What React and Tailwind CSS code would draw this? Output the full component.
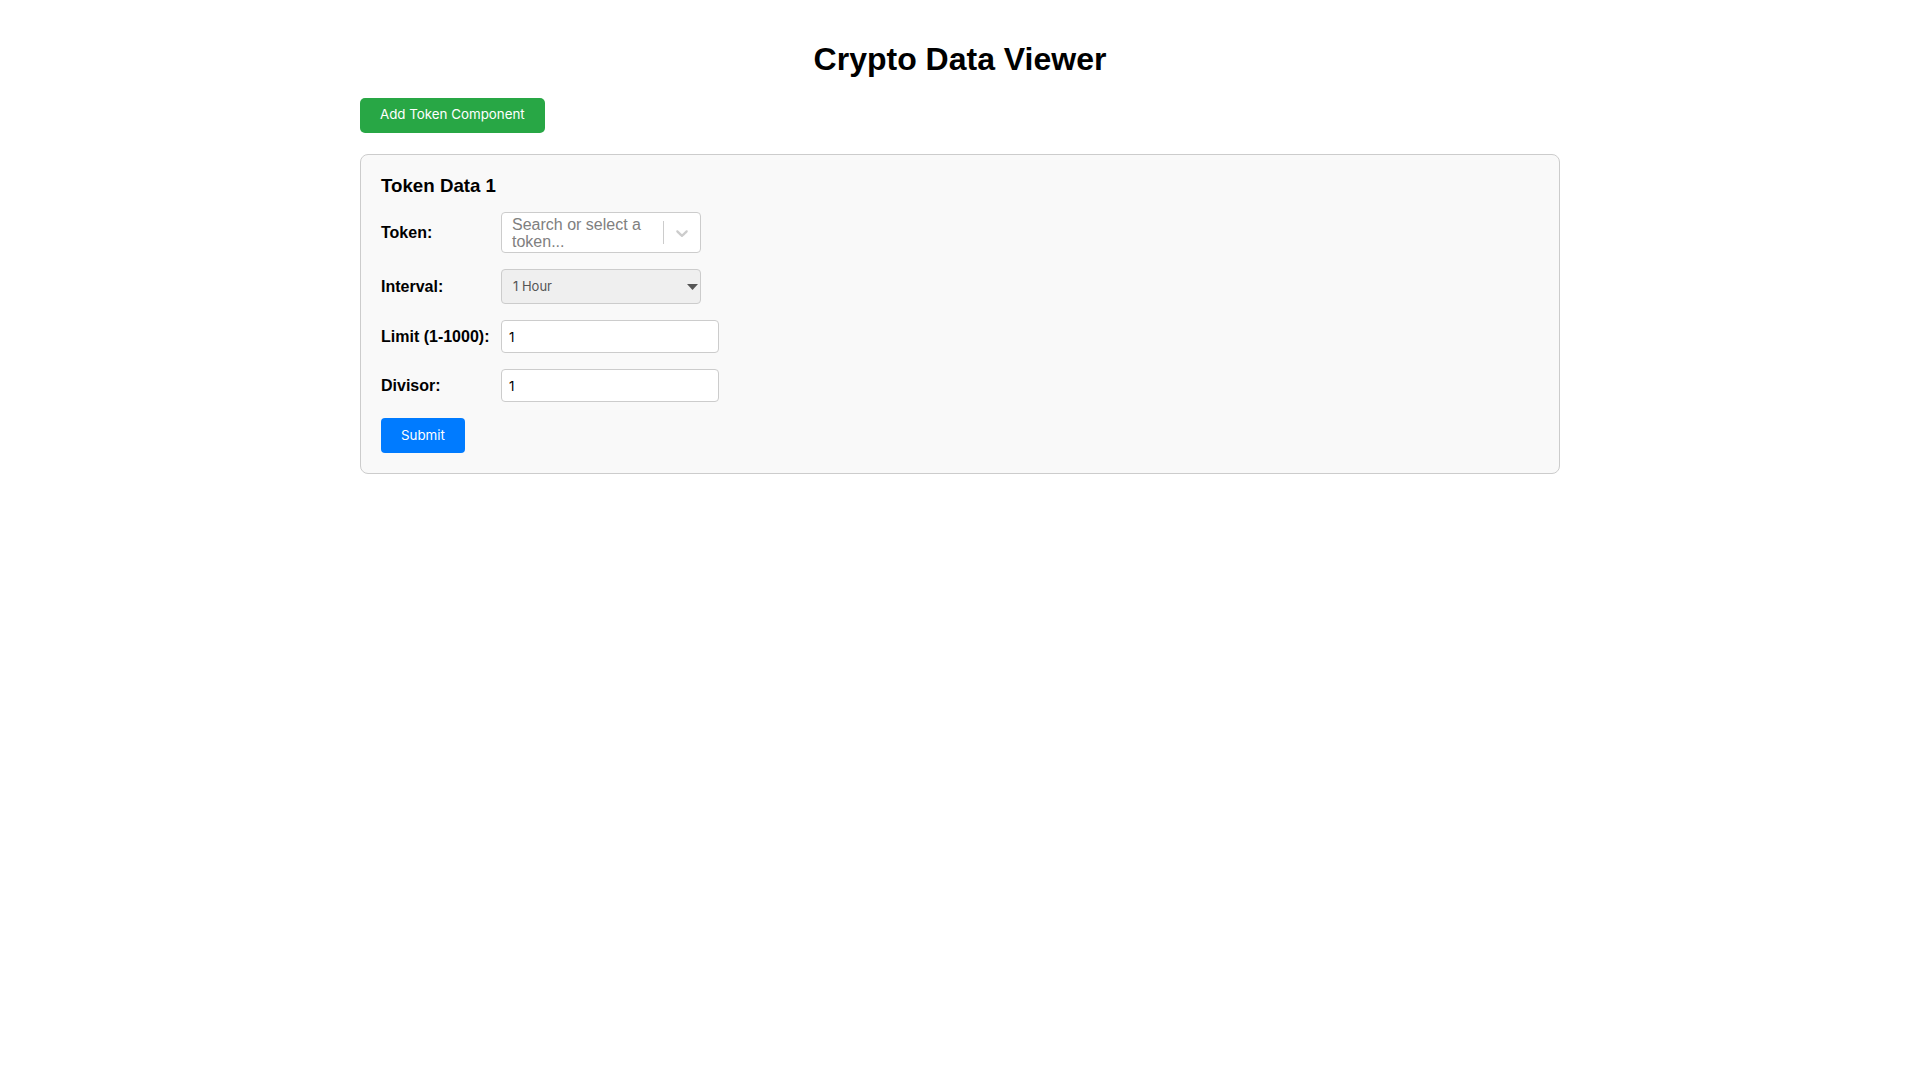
import React from "react";

export default function App() {
  return (
    <div className="min-h-screen bg-white pt-5 font-['Liberation_Sans',Arial,sans-serif] text-black">
      <div className="mx-auto w-[1200px]">
        <h1 className="mt-[21px] mb-[20px] text-center text-[32px] font-bold leading-[1.15]">
          Crypto Data Viewer
        </h1>
        <button className="mb-[21px] flex h-[35px] items-center rounded-[5px] bg-[#28a745] px-5 font-['Inter',sans-serif] text-[13.33px] text-white">
          Add Token Component
        </button>
        <div className="rounded-lg border border-[#cccccc] bg-[#f9f9f9] p-5">
          <h3 className="mb-4 text-[18.72px] font-bold leading-[1.15]">Token Data 1</h3>
          <div className="flex flex-col gap-4">
            <div className="flex items-center">
              <label className="w-[120px] text-[16px] font-bold">Token:</label>
              <div className="flex h-[41px] w-[200px] items-center rounded-[4px] border border-[#cccccc] bg-white">
                <div className="flex-1 pl-[10px] pr-[12px] text-[16px] leading-[17px] text-[#808080]">
                  Search or select a token...
                </div>
                <div className="h-[23px] w-px bg-[#cccccc]" />
                <div className="flex w-[36px] items-center justify-center">
                  <svg width="20" height="20" viewBox="0 0 20 20" fill="#cccccc">
                    <path d="M4.516 7.548c0.436-0.446 1.043-0.481 1.576 0l3.908 3.747 3.908-3.747c0.533-0.481 1.141-0.446 1.574 0 0.436 0.445 0.408 1.197 0 1.615-0.406 0.418-4.695 4.502-4.695 4.502-0.217 0.223-0.502 0.335-0.787 0.335s-0.57-0.112-0.789-0.335c0 0-4.287-4.084-4.695-4.502s-0.436-1.17 0-1.615z" />
                  </svg>
                </div>
              </div>
            </div>
            <div className="flex items-center">
              <label className="w-[120px] text-[16px] font-bold">Interval:</label>
              <div className="flex h-[35px] w-[200px] items-center justify-between rounded-[4px] border border-[#cccccc] bg-[#efefef] pl-[11px] pr-[2px] font-['Inter',sans-serif] text-[13px] text-[#555555]">
                <span>1 Hour</span>
                <svg width="11" height="6" viewBox="0 0 11 6" fill="#555555">
                  <path d="M0 0 L11 0 L5.5 6 Z" />
                </svg>
              </div>
            </div>
            <div className="flex items-center">
              <label className="w-[120px] text-[16px] font-bold">Limit (1-1000):</label>
              <input
                type="number"
                defaultValue="1"
                className="h-[33px] w-[218px] rounded-[4px] border border-[#cccccc] bg-white px-[7px] font-['Inter',sans-serif] text-[13.33px] text-black outline-none [appearance:textfield]"
              />
            </div>
            <div className="flex items-center">
              <label className="w-[120px] text-[16px] font-bold">Divisor:</label>
              <input
                type="number"
                defaultValue="1"
                className="h-[33px] w-[218px] rounded-[4px] border border-[#cccccc] bg-white px-[7px] font-['Inter',sans-serif] text-[13.33px] text-black outline-none [appearance:textfield]"
              />
            </div>
            <div>
              <button className="h-[35px] rounded-[4px] bg-[#007bff] px-5 font-['Inter',sans-serif] text-[13.33px] text-white">
                Submit
              </button>
            </div>
          </div>
        </div>
      </div>
    </div>
  );
}
